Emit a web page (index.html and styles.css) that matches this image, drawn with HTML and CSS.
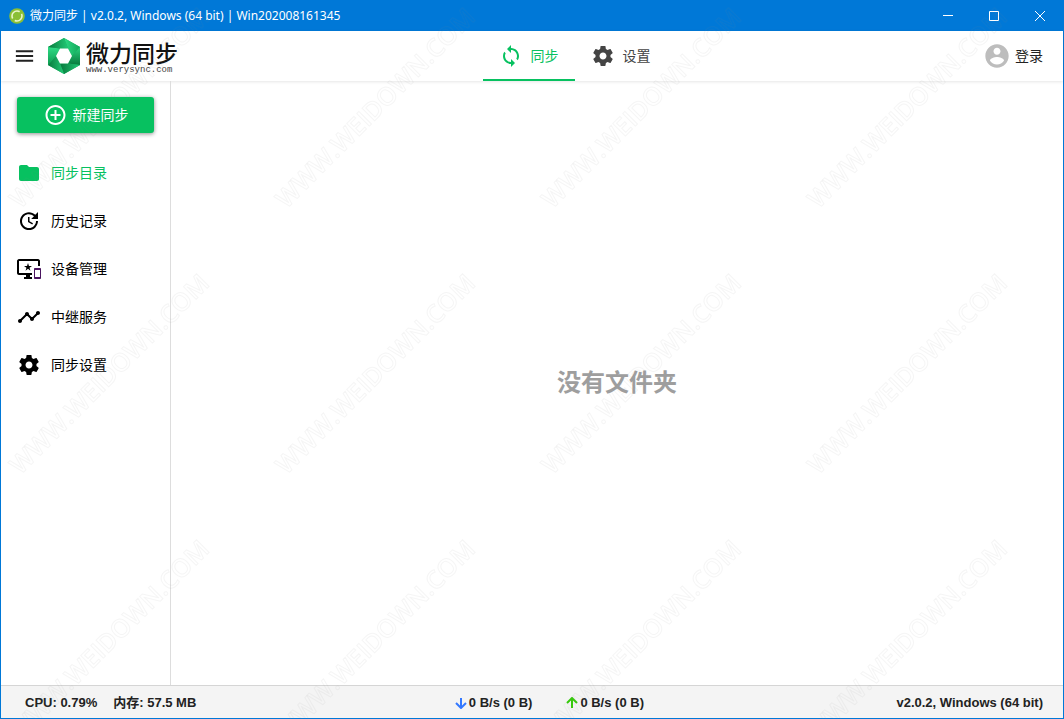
FILE: index.html
```html
<!DOCTYPE html>
<html lang="zh-CN">
<head>
<meta charset="utf-8">
<meta name="viewport" content="width=device-width, initial-scale=1">
<title>微力同步</title>
<link rel="stylesheet" href="styles.css">
</head>
<body>
<svg class="defs" width="0" height="0" aria-hidden="true">
  <symbol id="gear" viewBox="0 0 24 24"><path d="M19.43 12.98c.04-.32.07-.64.07-.98s-.03-.66-.07-.98l2.11-1.65c.19-.15.24-.42.12-.64l-2-3.46c-.12-.22-.39-.3-.61-.22l-2.49 1c-.52-.4-1.08-.73-1.69-.98l-.38-2.65C14.46 2.18 14.25 2 14 2h-4c-.25 0-.46.18-.49.42l-.38 2.65c-.61.25-1.17.59-1.69.98l-2.49-1c-.23-.09-.49 0-.61.22l-2 3.46c-.13.22-.07.49.12.64l2.11 1.65c-.04.32-.07.65-.07.98s.03.66.07.98l-2.11 1.65c-.19.15-.24.42-.12.64l2 3.46c.12.22.39.3.61.22l2.49-1c.52.4 1.08.73 1.69.98l.38 2.65c.03.24.24.42.49.42h4c.25 0 .46-.18.49-.42l.38-2.65c.61-.25 1.17-.59 1.69-.98l2.49 1c.23.09.49 0 .61-.22l2-3.46c.12-.22.07-.49-.12-.64l-2.11-1.65zM12 15.500c-1.930 0-3.500-1.570-3.500-3.500s1.570-3.500 3.500-3.500 3.500 1.570 3.500 3.500-1.570 3.500-3.500 3.500z"/></symbol>
</svg>
<div class="window">
  <header class="titlebar">
    <svg class="app-icon" viewBox="0 0 16 16" aria-hidden="true"><circle cx="8" cy="8" r="7.8" fill="#8abf35"/><circle cx="8" cy="8" r="5" fill="none" stroke="#e9f6c9" stroke-width="1.6" stroke-dasharray="13 2.7" stroke-dashoffset="3"/></svg>
    <span class="window-title">微力同步 | v2.0.2, Windows (64 bit) | Win202008161345</span>
    <div class="window-controls">
      <button class="window-button" aria-label="最小化"><svg viewBox="0 0 12 12"><path d="M1 5.5h10"/></svg></button>
      <button class="window-button" aria-label="最大化"><svg viewBox="0 0 12 12"><path d="M1.5 1.5h9v9h-9z"/></svg></button>
      <button class="window-button" aria-label="关闭"><svg viewBox="0 0 12 12"><path d="M1 1l10 10M11 1L1 11"/></svg></button>
    </div>
  </header>

  <div class="toolbar">
    <div class="brand">
      <button class="menu-button" aria-label="菜单"><svg viewBox="0 0 24 24"><path d="M3 18h18v-2H3v2zm0-5h18v-2H3v2zm0-7v2h18V6H3z"/></svg></button>
      <a class="logo" href="#">
        <svg class="logo-mark" viewBox="0 0 32 36" aria-hidden="true">
          <defs>
            <linearGradient id="right" x1="0" y1="0" x2="1" y2="0"><stop offset="0" stop-color="#2edb84"/><stop offset="1" stop-color="#12a75a"/></linearGradient>
            <linearGradient id="left" x1="1" y1="0" x2="0" y2="0"><stop offset="0" stop-color="#22c975"/><stop offset="1" stop-color="#087a3d"/></linearGradient>
            <linearGradient id="down" x1="0" y1="0" x2="0" y2="1"><stop offset="0" stop-color="#2bd27e"/><stop offset="1" stop-color="#087a3d"/></linearGradient>
            <linearGradient id="up" x1="0" y1="1" x2="0" y2="0"><stop offset="0" stop-color="#0c9a4f"/><stop offset="1" stop-color="#2fdc86"/></linearGradient>
          </defs>
          <path fill="#12a95b" d="M16 0l16 9v18l-16 9L0 27V9z"/>
          <path fill="url(#right)" d="M16 0l16 9-8 9-4-7.500z"/>
          <path fill="url(#down)" d="M32 9v18l-12-1.500 4-7.500z"/>
          <path fill="url(#left)" d="M32 27l-16 9-4-10.500h8z"/>
          <path fill="url(#left)" d="M16 36L0 27l8-9 4 7.500z"/>
          <path fill="url(#up)" d="M0 27V9l12 1.500L8 18z"/>
          <path fill="url(#left)" d="M0 9l16-9 4 10.500h-8z"/>
          <path fill="#fff" d="M12 10.500h8l4 7.500-4 7.500h-8L8 18z"/>
        </svg>
        <span class="logo-words"><span class="logo-name">微力同步</span><span class="logo-url">www.verysync.com</span></span>
      </a>
    </div>
    <nav class="tabs" aria-label="主导航">
      <a class="tab tab-active" href="#"><svg viewBox="0 0 24 24"><path d="M12 4V1L8 5l4 4V6c3.31 0 6 2.69 6 6 0 1.01-.25 1.97-.7 2.8l1.46 1.46C19.54 15.03 20 13.57 20 12c0-4.42-3.58-8-8-8zm0 14c-3.31 0-6-2.69-6-6 0-1.01.25-1.97.7-2.8L5.24 7.74C4.46 8.97 4 10.43 4 12c0 4.42 3.58 8 8 8v3l4-4-4-4v3z"/></svg><span>同步</span></a>
      <a class="tab" href="#"><svg><use href="#gear"/></svg><span>设置</span></a>
    </nav>
    <div class="account">
      <button class="login"><svg viewBox="0 0 24 24"><path d="M12 2C6.48 2 2 6.48 2 12s4.48 10 10 10 10-4.480 10-10S17.520 2 12 2zm0 3c1.660 0 3 1.340 3 3s-1.340 3-3 3-3-1.340-3-3 1.340-3 3-3zm0 14.200c-2.500 0-4.710-1.280-6-3.220.03-1.990 4-3.080 6-3.080 1.990 0 5.970 1.090 6 3.080-1.290 1.940-3.500 3.220-6 3.220z"/></svg><span>登录</span></button>
    </div>
  </div>

  <div class="content">
    <aside class="sidebar">
      <button class="create"><svg viewBox="0 0 24 24"><path d="M13 7h-2v4H7v2h4v4h2v-4h4v-2h-4V7zm-1-5C6.480 2 2 6.480 2 12s4.480 10 10 10 10-4.480 10-10S17.520 2 12 2zm0 18c-4.410 0-8-3.590-8-8s3.590-8 8-8 8 3.590 8 8-3.590 8-8 8z"/></svg><span>新建同步</span></button>
      <nav class="side-nav" aria-label="侧边栏">
        <a class="side-link side-link-active" href="#"><svg viewBox="0 0 24 24"><path d="M10 4H4c-1.100 0-2 .9-2 2v12c0 1.100.9 2 2 2h16c1.100 0 2-.9 2-2V8c0-1.100-.9-2-2-2h-8l-2-2z"/></svg><span>同步目录</span></a>
        <a class="side-link" href="#"><svg viewBox="0 0 24 24"><path d="M21 10.120h-6.780l2.740-2.820c-2.730-2.700-7.150-2.800-9.880-.1-2.730 2.710-2.730 7.080 0 9.790s7.150 2.710 9.880 0C18.320 15.650 19 14.080 19 12.100h2c0 1.980-.88 4.550-2.640 6.290-3.510 3.480-9.210 3.480-12.720 0-3.500-3.470-3.530-9.110-.02-12.580s9.140-3.470 12.650 0L21 3v7.120zM12.500 8v4.250l3.500 2.080-.72 1.210L11 13V8h1.500z"/></svg><span>历史记录</span></a>
        <a class="side-link" href="#"><svg viewBox="0 0 24 24"><path d="M21 2H2C1 2 0 3 0 4v12c0 1 .9 2 2 2h7v2H7v2h8v-2h-2v-2h2v-2H2V4h19v5h2V4c0-1-.9-2-2-2zM11.970 9L11 6l-.97 3H7l2.470 1.760-.94 2.910L11 11.870l2.470 1.800-.94-2.910L15 9z"/><path fill="#4a145f" d="M23 11h-5c-.55 0-1 .45-1 1v9c0 .55.45 1 1 1h5c.55 0 1-.45 1-1v-9c0-.55-.45-1-1-1zm0 9h-5v-7h5z"/></svg><span>设备管理</span></a>
        <a class="side-link" href="#"><svg viewBox="0 0 24 24"><path d="M23 8c0 1.100-.9 2-2 2-.18 0-.35-.02-.51-.07l-3.560 3.550c.05.16.07.34.07.52 0 1.100-.9 2-2 2s-2-.9-2-2c0-.18.02-.36.07-.52l-2.550-2.550c-.16.05-.34.07-.52.07s-.36-.02-.52-.07l-4.550 4.560c.05.16.07.33.07.51 0 1.100-.9 2-2 2s-2-.9-2-2 .9-2 2-2c.18 0 .35.02.51.07l4.560-4.550C8.020 9.360 8 9.180 8 9c0-1.100.9-2 2-2s2 .9 2 2c0 .18-.02.36-.07.52l2.550 2.550c.16-.05.34-.07.52-.07s.36.02.52.07l3.550-3.560C19.020 8.350 19 8.180 19 8c0-1.100.9-2 2-2s2 .9 2 2z"/></svg><span>中继服务</span></a>
        <a class="side-link" href="#"><svg><use href="#gear"/></svg><span>同步设置</span></a>
      </nav>
    </aside>
    <main class="main"><h1 class="empty">没有文件夹</h1></main>
  </div>

  <footer class="status">
    <div class="status-group status-usage"><span>CPU: 0.79%</span><span>内存: 57.5 MB</span></div>
    <div class="status-group status-rates">
      <span class="rate"><svg class="down" viewBox="0 0 12 12"><path d="M6 1v9M1 6l5 5 5-5"/></svg>0 B/s (0 B)</span>
      <span class="rate"><svg class="up" viewBox="0 0 12 12"><path d="M6 11V2M1 6l5-5 5 5"/></svg>0 B/s (0 B)</span>
    </div>
    <div class="status-group"><span>v2.0.2, Windows (64 bit)</span></div>
  </footer>
</div>
<svg class="watermark" aria-hidden="true">
  <defs><pattern id="mark" x="-26" y="-26" width="266" height="266" patternUnits="userSpaceOnUse"><text class="mark-text" x="134" y="144" text-anchor="middle" transform="rotate(-45 133 133)">WWW.WEIDOWN.COM</text></pattern></defs>
  <rect width="100%" height="100%" fill="url(#mark)"/>
</svg>
</body>
</html>
```
FILE: styles.css
```css
* { box-sizing: border-box; }
body {
  margin: 0;
  color: #222;
  background: #fff;
  font-family: Roboto, "Noto Sans CJK SC", sans-serif;
  font-size: 14px;
  line-height: 20px;
}
button { border: 0; margin: 0; padding: 0; background: none; font: inherit; color: inherit; }
a { color: inherit; text-decoration: none; }
svg { flex: none; fill: currentColor; }
.defs { position: absolute; }

.window {
  display: flex;
  flex-direction: column;
  min-height: 100vh;
  border: 1px solid #0078d7;
}

.titlebar {
  display: flex;
  align-items: center;
  height: 30px;
  padding-left: 8px;
  color: #fff;
  background: #0078d7;
  font: 12px/16px "Noto Sans", "Noto Sans CJK SC", sans-serif;
}
.app-icon { width: 16px; height: 16px; }
.window-title { flex: 1; margin-left: 5px; }
.window-controls { display: flex; }
.window-button { display: flex; align-items: center; justify-content: center; width: 46px; height: 30px; }
.window-button svg { width: 12px; height: 12px; fill: none; stroke: #fff; }

.toolbar {
  display: flex;
  justify-content: space-between;
  height: 50px;
  box-shadow: 0 1px 3px rgba(0, 0, 0, .1);
}
.brand { display: flex; align-items: center; padding-left: 12px; }
.menu-button { display: flex; }
.menu-button svg { width: 23px; height: 24px; }
.logo { display: flex; align-items: center; gap: 6px; margin-left: 12px; color: #111; }
.logo-mark { width: 32px; height: 36px; }
.logo-words { display: flex; flex-direction: column; }
.logo-name { font: 500 23px/28px "Noto Sans CJK SC", sans-serif; }
.logo-url { color: #444; font: 9px/8px "Liberation Mono", monospace; }
.tabs { display: flex; color: #444; }
.tab { display: flex; align-items: center; gap: 8px; width: 92px; padding: 2px 16px 0; border-bottom: 2px solid transparent; }
.tab svg { width: 24px; height: 24px; }
.tab-active { color: #07c160; border-color: #07c160; }
.account { display: flex; align-items: center; padding: 0 20px 0 12px; }
.login { display: flex; align-items: center; gap: 4px; }
.login svg { width: 28px; height: 28px; color: #bdbdbd; }

.content { display: flex; flex: 1; }
.sidebar { width: 170px; padding: 16px; border-right: 1px solid #ddd; }
.create {
  display: flex;
  align-items: center;
  justify-content: center;
  gap: 5px;
  width: 100%;
  height: 36px;
  border-radius: 3px;
  color: #fff;
  background: #07c160;
  box-shadow: 0 1px 4px rgba(0, 0, 0, .45);
}
.create svg { width: 25px; height: 24px; }
.side-nav { display: flex; flex-direction: column; margin-top: 16px; color: #000; }
.side-link { display: flex; align-items: center; gap: 10px; height: 48px; }
.side-link svg { width: 24px; height: 24px; }
.side-link-active { color: #07c160; }
.main { display: flex; flex: 1; align-items: center; justify-content: center; }
.empty { margin: 0; color: #9e9e9e; font-size: 24px; line-height: 32px; font-weight: 700; }

.status {
  display: flex;
  align-items: center;
  justify-content: space-between;
  height: 33px;
  padding: 2px 20px 0 24px;
  border-top: 1px solid #d5d5d5;
  background: #f4f4f4;
  font: 700 13px/20px "Liberation Sans", "Noto Sans CJK SC", sans-serif;
}
.status-group { display: flex; align-items: baseline; }
.status-usage { gap: 16px; padding-right: 6px; }
.status-rates { gap: 34px; }
.rate { display: flex; align-items: center; gap: 2px; }
.rate svg { width: 12px; height: 12px; fill: none; stroke: currentColor; stroke-width: 2; }
.down { color: #3478ff; }
.up { color: #36c90c; }

.watermark { position: absolute; inset: 0; width: 100%; height: 100%; pointer-events: none; }
.mark-text { fill: none; stroke: rgba(128, 128, 128, .08); stroke-width: 1; font: 600 25px "Open Sans", sans-serif; }
```
